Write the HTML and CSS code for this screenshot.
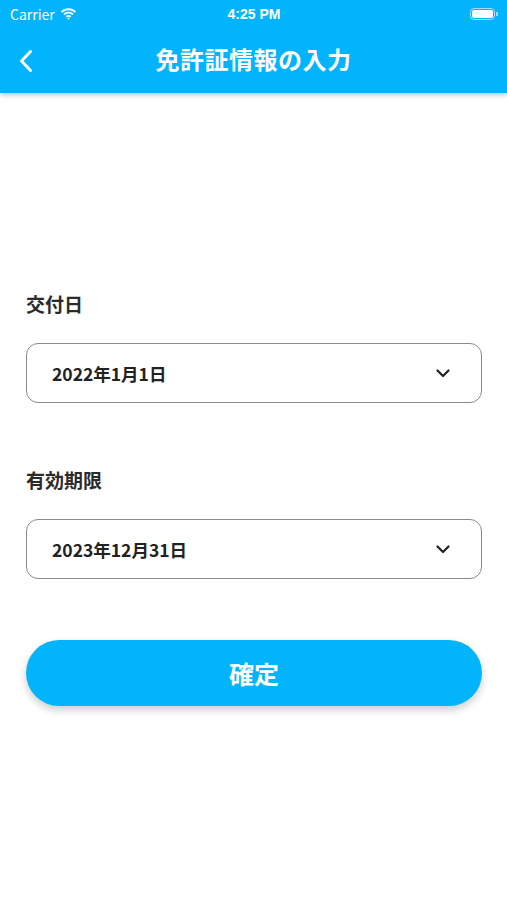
FILE: index.html
```html
<!DOCTYPE html>
<html lang="ja">
<head>
  <meta charset="UTF-8" />
  <meta name="viewport" content="width=device-width, initial-scale=1.0"/>
  <title>免許証情報の入力</title>
  <link rel="stylesheet" href="styles.css">
</head>
<body>

  <header class="app-header">
    <div class="status-bar">
      <div class="status-left">
        <span>Carrier</span>
        <svg class="wifi" width="17" height="12" viewBox="0 0 17 12">
          <path d="M8.5 2.2c2.4 0 4.6.9 6.3 2.5l1.3-1.3C14.1 1.4 11.4.3 8.5.3S2.9 1.4.9 3.4l1.3 1.3c1.7-1.6 3.9-2.5 6.3-2.5z" fill="#fff"/>
          <path d="M8.5 5.6c1.5 0 2.8.6 3.9 1.5l1.3-1.3C12.3 4.5 10.5 3.7 8.5 3.7S4.7 4.5 3.3 5.8l1.3 1.3c1.1-.9 2.4-1.5 3.9-1.5z" fill="#fff"/>
          <path d="M8.5 9c.6 0 1.1.2 1.5.6l1.3-1.3C10.6 7.5 9.6 7.1 8.5 7.1s-2.1.4-2.8 1.2L7 9.6c.4-.4.9-.6 1.5-.6z" fill="#fff"/>
          <path d="M8.5 11.8l1.3-1.3c-.3-.3-.8-.5-1.3-.5s-1 .2-1.3.5z" fill="#fff"/>
        </svg>
      </div>
      <span class="status-time">4:25 PM</span>
      <div class="status-right">
        <div class="battery"><div class="battery-fill"></div></div>
        <div class="battery-cap"></div>
      </div>
    </div>
    <div class="nav-bar">
      <button class="back-btn" aria-label="戻る">
        <svg width="14" height="24" viewBox="0 0 14 24">
          <path d="M11.5 2.5L2.5 12l9 9.5" fill="none" stroke="#fff" stroke-width="3" stroke-linecap="round" stroke-linejoin="round"/>
        </svg>
      </button>
      <h1>免許証情報の入力</h1>
    </div>
  </header>

  <main class="form">
    <div class="field">
      <label class="field-label">交付日</label>
      <div class="select-box">
        <span>2022年1月1日</span>
        <svg width="14" height="9" viewBox="0 0 14 9">
          <path d="M1.5 1.5L7 7l5.5-5.5" fill="none" stroke="#222" stroke-width="2.2" stroke-linecap="round" stroke-linejoin="round"/>
        </svg>
      </div>
    </div>

    <div class="field">
      <label class="field-label">有効期限</label>
      <div class="select-box">
        <span>2023年12月31日</span>
        <svg width="14" height="9" viewBox="0 0 14 9">
          <path d="M1.5 1.5L7 7l5.5-5.5" fill="none" stroke="#222" stroke-width="2.2" stroke-linecap="round" stroke-linejoin="round"/>
        </svg>
      </div>
    </div>

    <button class="confirm-btn">確定</button>
  </main>

</body>
</html>
```

FILE: styles.css
```css
:root {
  --primary-color: #02b4fc;
  --text-dark: #2b2b2b;
}

* {
  box-sizing: border-box;
  font-family: "Noto Sans CJK JP", "Noto Sans", sans-serif;
}

body {
  margin: 0;
  background: #fff;
  width: 507px;
  min-height: 900px;
}

.app-header {
  background: var(--primary-color);
  height: 93px;
  box-shadow: 0 2px 5px rgba(0, 0, 0, 0.25);
  color: #fff;
}

.status-bar {
  height: 28px;
  display: grid;
  grid-template-columns: 1fr auto 1fr;
  align-items: center;
  padding: 0 9px 0 10px;
  font-family: "Liberation Sans", Arial, sans-serif;
  font-size: 14px;
}

.status-left {
  display: flex;
  align-items: center;
  gap: 5px;
}

.status-time {
  font-weight: bold;
  font-family: "Liberation Sans", Arial, sans-serif;
}

.status-right {
  display: flex;
  justify-content: flex-end;
  align-items: center;
}

.battery {
  width: 25px;
  height: 12px;
  border: 1px solid rgba(255, 255, 255, 0.6);
  border-radius: 4px;
  padding: 1px;
}

.battery-fill {
  width: 100%;
  height: 100%;
  background: #fff;
  border-radius: 2px;
}

.battery-cap {
  width: 2px;
  height: 4px;
  background: rgba(255, 255, 255, 0.6);
  border-radius: 0 1px 1px 0;
  margin-left: 1px;
}

.nav-bar {
  height: 65px;
  display: flex;
  align-items: center;
  justify-content: center;
  position: relative;
}

.back-btn {
  position: absolute;
  left: 19px;
  top: 21px;
  background: none;
  border: none;
  padding: 0;
  display: flex;
}

.nav-bar h1 {
  margin: 0 0 4px;
  font-size: 24px;
  font-weight: bold;
  letter-spacing: 0.5px;
}

.form {
  padding: 199px 25px 0 26px;
}

.field + .field {
  margin-top: 65px;
}

.field-label {
  display: block;
  font-size: 19px;
  font-weight: bold;
  color: var(--text-dark);
  line-height: 24px;
  margin-bottom: 27px;
}

.select-box {
  height: 60px;
  border: 1px solid #8a8a8a;
  border-radius: 12px;
  display: flex;
  align-items: center;
  justify-content: space-between;
  padding: 0 31px 0 25px;
  font-size: 17.5px;
  font-weight: bold;
  color: #222;
}

.confirm-btn {
  width: 100%;
  height: 66px;
  margin-top: 61px;
  border: none;
  border-radius: 33px;
  background: var(--primary-color);
  color: #fff;
  font-size: 25px;
  font-weight: bold;
  box-shadow: 0 4px 8px rgba(0, 0, 0, 0.2);
  display: block;
  cursor: pointer;
}
```
